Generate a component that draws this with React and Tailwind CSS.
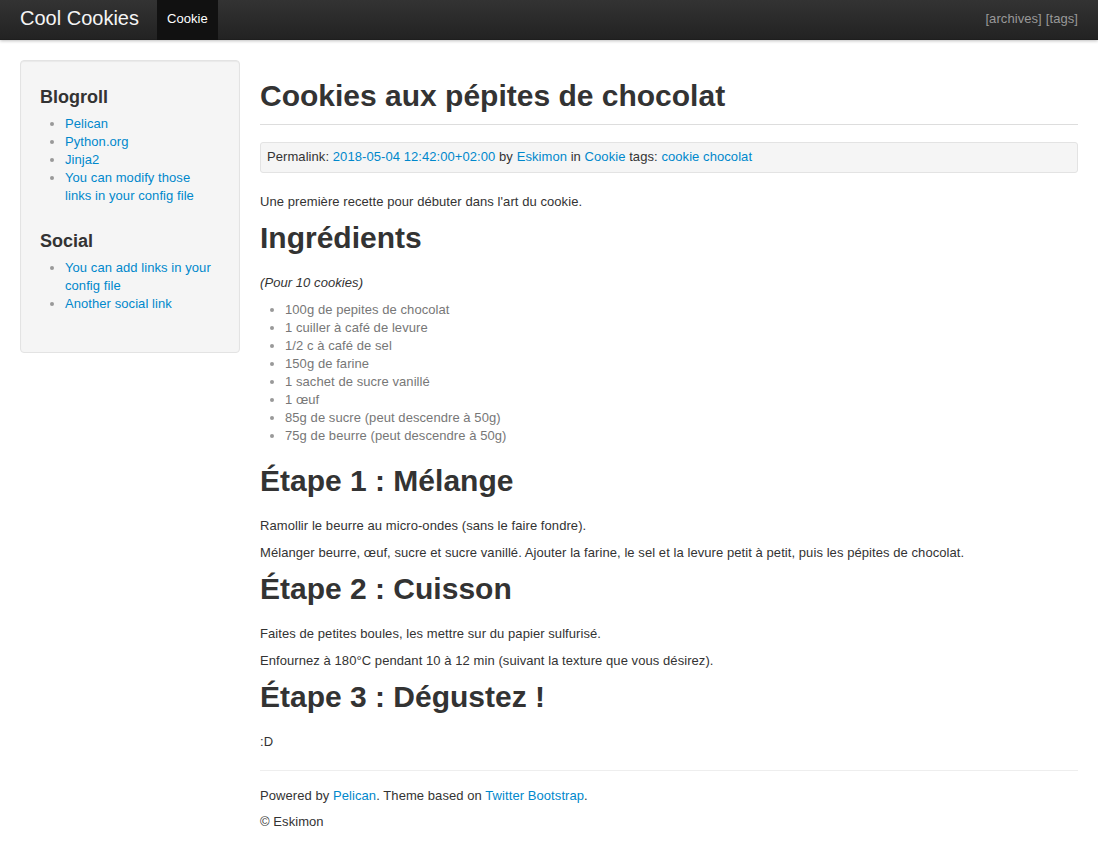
const LINK = "text-[#0088cc] hover:underline";

const blogroll = [
  "Pelican",
  "Python.org",
  "Jinja2",
  "You can modify those links in your config file",
];
const social = ["You can add links in your config file", "Another social link"];

const ingredients = [
  "100g de pepites de chocolat",
  "1 cuiller à café de levure",
  "1/2 c à café de sel",
  "150g de farine",
  "1 sachet de sucre vanillé",
  "1 œuf",
  "85g de sucre (peut descendre à 50g)",
  "75g de beurre (peut descendre à 50g)",
];

function SideList({ items }) {
  return (
    <ul className="list-disc pl-[25px] pr-[5px] mb-[24px] marker:text-[#999]">
      {items.map((t) => (
        <li key={t} className="leading-[18px]">
          <a href="#" className={LINK}>{t}</a>
        </li>
      ))}
    </ul>
  );
}

function Heading({ children }) {
  return (
    <h1 className="text-[30px] leading-[36px] font-bold text-[#333] tracking-normal mb-[18px]">{children}</h1>
  );
}

export default function App() {
  return (
    <div className="min-h-screen bg-white text-[13px] leading-[18px] tracking-[0.07px] text-[#333] font-['Liberation_Sans',Arial,sans-serif]">
      {/* Navbar */}
      <nav className="h-10 bg-gradient-to-b from-[#333] to-[#222] shadow-[0_1px_3px_rgba(0,0,0,0.25),inset_0_-1px_0_rgba(0,0,0,0.1)] flex items-stretch px-5">
        <a href="#" className="text-[20px] leading-[36px] tracking-normal text-[#f5f5f5] mr-[18px]">Cool Cookies</a>
        <a href="#" className="bg-[#111] text-white px-[10px] leading-[38px]">Cookie</a>
        <div className="ml-auto flex items-center pb-[2px] gap-1 text-[#999]">
          <a href="#">[archives]</a>
          <a href="#">[tags]</a>
        </div>
      </nav>

      <div className="flex gap-5 px-5 pt-5">
        {/* Sidebar */}
        <aside className="w-[220px] shrink-0 self-start bg-[#f5f5f5] border border-[#e3e3e3] rounded-[4px] px-[19px] pt-[19px] pb-[3px] shadow-[inset_0_1px_1px_rgba(0,0,0,0.05)]">
          <h3 className="text-[18px] leading-[24px] font-bold tracking-normal mt-[5px] mb-[6px]">Blogroll</h3>
          <SideList items={blogroll} />
          <h3 className="text-[18px] leading-[24px] font-bold tracking-normal mt-[6px] mb-[6px]">Social</h3>
          <SideList items={social} />
          <div className="h-[12px]" />
        </aside>

        {/* Content */}
        <main className="flex-1 min-w-0">
          <div className="mt-[18px] pb-[10px] border-b border-[#ddd] mb-[17px]">
            <h1 className="text-[30px] leading-[36px] font-bold tracking-normal text-[#333]">Cookies aux pépites de chocolat</h1>
          </div>

          <div className="bg-[#f5f5f5] border border-[#e3e3e3] rounded-[3px] px-[6px] pt-[5px] pb-[6px] mb-[20px]">
            Permalink: <a href="#" className={LINK}>2018-05-04 12:42:00+02:00</a> by{" "}
            <a href="#" className={LINK}>Eskimon</a> in <a href="#" className={LINK}>Cookie</a> tags:{" "}
            <a href="#" className={LINK}>cookie</a> <a href="#" className={LINK}>chocolat</a>
          </div>

          <p className="mb-[9px]">Une première recette pour débuter dans l'art du cookie.</p>

          <Heading>Ingrédients</Heading>
          <p className="mb-[9px] italic">(Pour 10 cookies)</p>
          <ul className="list-disc pl-[25px] mb-[18px] text-[#777] marker:text-[#999]">
            {ingredients.map((t) => (
              <li key={t}>{t}</li>
            ))}
          </ul>

          <Heading>Étape 1 : Mélange</Heading>
          <p className="mb-[9px]">Ramollir le beurre au micro-ondes (sans le faire fondre).</p>
          <p className="mb-[9px]">
            Mélanger beurre, œuf, sucre et sucre vanillé. Ajouter la farine, le sel et la levure petit à petit, puis les pépites de chocolat.
          </p>

          <Heading>Étape 2 : Cuisson</Heading>
          <p className="mb-[9px]">Faites de petites boules, les mettre sur du papier sulfurisé.</p>
          <p className="mb-[9px]">Enfournez à 180°C pendant 10 à 12 min (suivant la texture que vous désirez).</p>

          <Heading>Étape 3 : Dégustez !</Heading>
          <p className="mb-[9px]">:D</p>

          <footer className="mt-[19px] border-t border-[#eee] pt-[16px] pb-4">
            <p className="mb-[8px]">
              Powered by <a href="#" className={LINK}>Pelican</a>. Theme based on{" "}
              <a href="#" className={LINK}>Twitter Bootstrap</a>.
            </p>
            <p>© Eskimon</p>
          </footer>
        </main>
      </div>
    </div>
  );
}
